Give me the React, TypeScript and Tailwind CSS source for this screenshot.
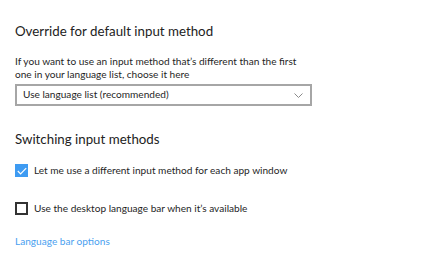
export default function App() {
  const font = { fontFamily: 'Lato, "Noto Sans", Arial, sans-serif' };
  return (
    <div className="w-[440px] h-[275px] bg-white text-[#1f1f1f] overflow-hidden" style={font}>
      <div className="pl-[15px] pt-[21px]">
        <h2 className="text-[13.3px] leading-[20px] font-normal text-[#222]">Override for default input method</h2>
        <p className="mt-[14px] text-[10.1px] leading-[13px] w-[300px]">
          If you want to use an input method that’s different than the first one in your language list, choose it here
        </p>
        <div className="mt-[3px] w-[297px] h-[22px] border-2 border-[#a6a6a6] flex items-center justify-between pl-[6px] pr-[7px]">
          <span className="text-[10.1px]">Use language list (recommended)</span>
          <svg width="9" height="5" viewBox="0 0 9 5" fill="none" stroke="#8a8a8a" strokeWidth="1">
            <path d="M0.5 0.5 L4.5 4.5 L8.5 0.5" />
          </svg>
        </div>
        <h2 className="mt-[23px] text-[13.3px] leading-[20px] font-normal text-[#222]">Switching input methods</h2>
        <div className="mt-[15px] h-[13px] flex items-center gap-[6px]">
          <div className="w-[13px] h-[13px] bg-[#3e9bf2] flex items-center justify-center">
            <svg width="10" height="8" viewBox="0 0 10 8" fill="none" stroke="white" strokeWidth="1.2">
              <path d="M0.8 4 L3.6 6.8 L9.2 1.2" />
            </svg>
          </div>
          <span className="text-[10.1px]">Let me use a different input method for each app window</span>
        </div>
        <div className="mt-[25px] h-[13px] flex items-center gap-[6px]">
          <div className="w-[13px] h-[13px] border-2 border-[#333]" />
          <span className="text-[10.1px]">Use the desktop language bar when it’s available</span>
        </div>
        <div className="mt-[19px] text-[10.1px] leading-[14px] text-[#4a9ff0]">Language bar options</div>
      </div>
    </div>
  );
}
